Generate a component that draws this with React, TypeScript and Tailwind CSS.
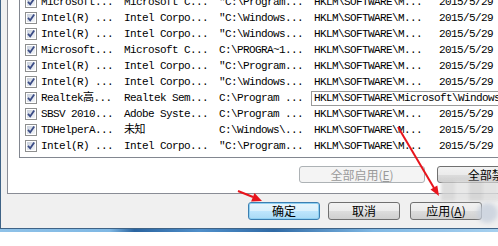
import React from 'react';

type Row = [string, string, string];

const rows: Row[] = [
  ['Microsoft...', 'Microsoft C...', '"C:\\Program...'],
  ['Intel(R) ...', 'Intel Corpo...', '"C:\\Windows...'],
  ['Intel(R) ...', 'Intel Corpo...', '"C:\\Windows...'],
  ['Microsoft...', 'Microsoft C...', 'C:\\PROGRA~1...'],
  ['Intel(R) ...', 'Intel Corpo...', '"C:\\Program...'],
  ['Intel(R) ...', 'Intel Corpo...', '"C:\\Windows...'],
  ['Realtek高...', 'Realtek Sem...', 'C:\\Program ...'],
  ['SBSV 2010...', 'Adobe Syste...', 'C:\\Program ...'],
  ['TDHelperA...', '未知', 'C:\\Windows\\...'],
  ['Intel(R) ...', 'Intel Corpo...', '"C:\\Program...'],
];

const Check = () => (
  <svg width="12" height="12" viewBox="0 0 12 12" className="shrink-0">
    <defs>
      <linearGradient id="cbfill" x1="0" y1="0" x2="1" y2="1">
        <stop offset="0" stopColor="#c9d0dc" />
        <stop offset="1" stopColor="#f3f5f8" />
      </linearGradient>
    </defs>
    <rect x="0.5" y="0.5" width="11" height="11" fill="#fff" stroke="#8e8f8f" />
    <rect x="2" y="2" width="8" height="8" fill="url(#cbfill)" />
    <path d="M3 5.8 L5.2 8.3 L9.2 2.6" fill="none" stroke="#3b4c86" strokeWidth="1.8" />
  </svg>
);

const normalBtn =
  'flex items-center justify-center rounded-[3px] border border-[#707070] bg-[linear-gradient(#f2f2f2_0%,#ebebeb_50%,#dddddd_50%,#cfcfcf_100%)] text-black';

export default function App() {
  return (
    <div className="relative h-[246px] w-[498px] overflow-hidden bg-white font-['Liberation_Mono','Noto_Sans_CJK_SC',monospace]">
      <div className="flex h-[232px] flex-col">
        <div className="flex min-h-0 flex-1">
          <div className="w-[4px] bg-gradient-to-r from-[#5b9ad0] to-[#a2cdec]" />
          <div className="flex-1 border-b border-l border-[#3f6386] bg-[#f0f0f0] pl-[6px]">
            {/* tab page */}
            <div className="h-[194px] border-b border-l border-[#898c95] bg-white pl-[11px]">
              <div className="h-[158px] overflow-hidden border-b border-l border-[#828790]">
                <div className="-mt-[6px] text-[11px] tracking-[-0.6px] text-black">
                  {rows.map((r, i) => (
                    <div key={i} className="flex h-[16px] items-center whitespace-pre">
                      <div className="flex w-[104px] shrink-0 items-center gap-[4px] pl-[5px]">
                        <Check />
                        <span>{r[0]}</span>
                      </div>
                      <div className="w-[95px] shrink-0">{r[1]}</div>
                      <div className="w-[95px] shrink-0">{r[2]}</div>
                      {i === 6 ? (
                        <div className="-ml-[3px] flex h-[15px] w-[200px] shrink-0 items-center border border-[#9a9a9a] bg-white pl-[2px]">
                          HKLM\SOFTWARE\Microsoft\Windows
                        </div>
                      ) : (
                        <>
                          <div className="w-[125px] shrink-0">HKLM\SOFTWARE\M...</div>
                          <div className="shrink-0">2015/5/29</div>
                        </>
                      )}
                    </div>
                  ))}
                </div>
              </div>
              <div className="mt-[8px] flex font-['Noto_Sans_CJK_SC',sans-serif] text-[12px]">
                <div className="ml-[280px] flex h-[17px] w-[126px] shrink-0 items-center justify-center rounded-[3px] border border-[#adb2b5] bg-[#f4f4f4] text-[#9a9a9a]">
                  全部启用(<span className="underline">E</span>)
                </div>
                <div className={`${normalBtn} ml-[12px] h-[17px] w-[126px] shrink-0`}>
                  全部禁用(<span className="underline">D</span>)
                </div>
              </div>
            </div>
            {/* dialog buttons */}
            <div className="mt-[8px] flex font-['Noto_Sans_CJK_SC',sans-serif] text-[12px]">
              <div className="ml-[241px] flex h-[18px] w-[72px] shrink-0 items-center justify-center rounded-[3px] border border-[#3c7fb1] bg-[linear-gradient(#e8f5fc_0%,#d9f0fc_50%,#bee6fd_50%,#a9daf5_100%)] text-black shadow-[inset_0_0_0_1px_#8fd0f2]">
                确定
              </div>
              <div className={`${normalBtn} ml-[8px] h-[18px] w-[72px] shrink-0`}>取消</div>
              <div className={`${normalBtn} ml-[10px] h-[18px] w-[72px] shrink-0`}>
                应用(<span className="underline">A</span>)
              </div>
            </div>
          </div>
        </div>
        <div className="h-[3px] bg-[linear-gradient(to_right,#8fc2e8_0%,#7fb8e4_22%,#2a64a0_27%,#4f8fca_40%,#2f6aa6_55%,#7fb8e4_75%,#a6d0ef_100%)]" />
      </div>

      {/* blurred watermark */}
      <div className="pointer-events-none absolute left-[441px] top-[181px] flex blur-[1.5px]">
        <div className="h-[20px] w-[14px] bg-[#d4d4d4]/80" />
        <div className="h-[20px] w-[14px] bg-[#e2e2e2]/80" />
        <div className="h-[20px] w-[14px] bg-[#cfcfcf]/80" />
        <div className="h-[20px] w-[16px] bg-[#dcdcdc]/80" />
      </div>
      <div className="pointer-events-none absolute left-[477px] top-[203px] h-[20px] w-[21px] rounded-full bg-[#c7d0dc]/80 blur-[2px]" />

      {/* red arrows */}
      <svg className="pointer-events-none absolute left-0 top-0" width="498" height="246" viewBox="0 0 498 246">
        <line x1="398" y1="127" x2="434" y2="188" stroke="#e8141c" strokeWidth="2" />
        <polygon points="439,196 430.5,189.4 437.3,185.4" fill="#e8141c" />
        <line x1="238" y1="191" x2="253" y2="197" stroke="#e8141c" strokeWidth="2" />
        <polygon points="262,201 251.1,201.4 254.5,193" fill="#e8141c" />
      </svg>
    </div>
  );
}
